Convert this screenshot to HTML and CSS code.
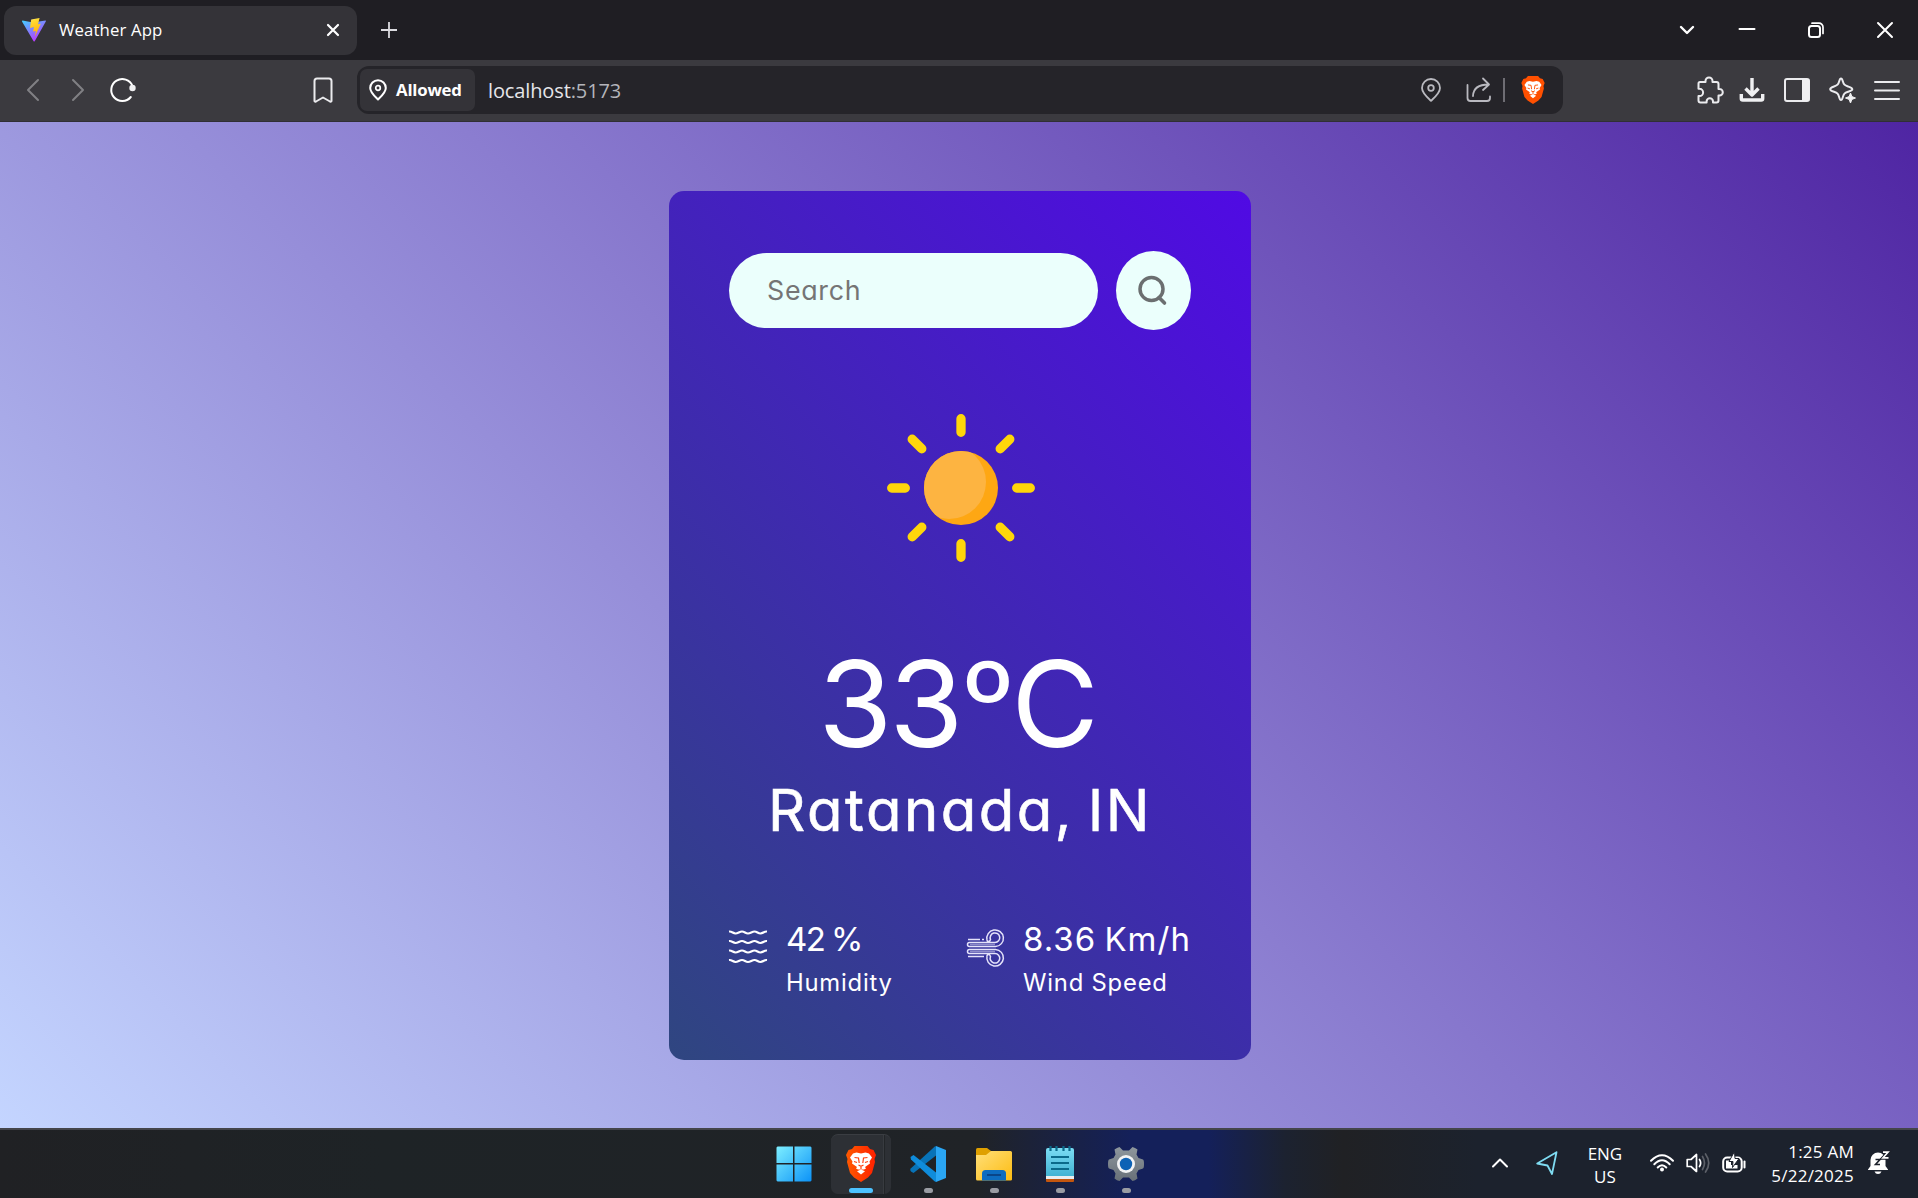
FILE: index.html
```html
<!DOCTYPE html>
<html lang="en">
<head>
<meta charset="utf-8">
<title>Weather App</title>
<link rel="stylesheet" href="styles.css">
</head>
<body>
<header class="titlebar">
  <div class="tab">
    <svg class="tab-logo" width="24" height="24" viewBox="0 0 24 24">
      <defs>
        <linearGradient id="va" x1="0" y1="0" x2="0.6" y2="1"><stop offset="0" stop-color="#41d1ff"/><stop offset="1" stop-color="#bd34fe"/></linearGradient>
        <linearGradient id="vb" x1="0.4" y1="0" x2="0.6" y2="1"><stop offset="0" stop-color="#ffea83"/><stop offset="0.1" stop-color="#ffdd35"/><stop offset="1" stop-color="#ffa800"/></linearGradient>
      </defs>
      <path d="M0.5 2.6 11 4.4 23.4 2.4Q24.300 2.500 23.800 3.400L12.700 23.200Q12.200 24 11.600 23.200L0 3.400Q0 2.600.5 2.600Z" fill="url(#va)"/>
      <path d="M9.200 1.500 17.600 0 16 6.200 18.800 5.700 12.700 18.900 13.900 13 11 13.500 12 9 8 9.900Z" fill="url(#vb)"/>
    </svg>
    <span class="tab-title">Weather App</span>
    <svg class="tab-close" width="14" height="14" viewBox="0 0 14 14"><path d="M2 2 12 12M12 2 2 12" stroke="#fff" stroke-width="2.200" stroke-linecap="round"/></svg>
  </div>
  <svg class="new-tab" width="18" height="18" viewBox="0 0 18 18"><path d="M9 1V17M1 9H17" stroke="#dcdce0" stroke-width="1.800"/></svg>
  <div class="window-controls">
    <svg class="tabs-menu" width="16" height="16" viewBox="0 0 16 16"><path d="M2 5 8 11 14 5" class="ln menu"/></svg>
    <svg width="16" height="16" viewBox="0 0 16 16"><path d="M.5 7H15.500" class="ln w2"/></svg>
    <svg width="16" height="16" viewBox="0 0 16 16"><rect x="1" y="4" width="11" height="11" rx="2.500" class="ln w2"/><path d="M4 1.200H11A4 4 0 0 1 15 5.200V11.500" class="ln"/></svg>
    <svg width="16" height="16" viewBox="0 0 16 16"><path d="M1 1 15 15M15 1 1 15" class="ln w2"/></svg>
  </div>
</header>

<nav class="toolbar">
  <svg class="nav-back" width="14" height="24" viewBox="0 0 14 24"><path d="M12 2 2 12 12 22" class="ln dim"/></svg>
  <svg class="nav-fwd" width="14" height="24" viewBox="0 0 14 24"><path d="M2 2 12 12 2 22" class="ln dim"/></svg>
  <svg class="nav-reload" width="28" height="28" viewBox="0 0 28 28"><path d="M21.800 21A11 11 0 1 1 23.500 10" class="ln w2"/><circle cx="23.500" cy="12" r="3.200" fill="#f0f0f2"/></svg>
  <svg class="nav-mark" width="20" height="26" viewBox="0 0 20 26"><path d="M4 1.500H16Q18.500 1.500 18.500 4V24Q18 25 17 24.500L10 20.500 3 24.500Q2 25 1.500 24V4Q1.500 1.500 4 1.500Z" class="ln w2 soft"/></svg>
  <div class="urlbar">
    <div class="chip">
      <svg width="18" height="22" viewBox="0 0 18 22"><path d="M9 20.500C6 17.500 1.200 13.500 1.200 9A7.800 7.800 0 0 1 16.800 9C16.800 13.500 12 17.500 9 20.500Z" class="ln w2"/><circle cx="9" cy="9" r="2.300" class="ln"/></svg>
      <span>Allowed</span>
    </div>
    <div class="url">localhost<span>:5173</span></div>
    <svg class="url-pin" width="20" height="24" viewBox="0 0 20 24"><path d="M10 22.800C6.500 19.500 1 15 1 10A9 9 0 0 1 19 10C19 15 13.500 19.500 10 22.800Z" class="ln grey"/><circle cx="10" cy="10" r="2.800" class="ln grey"/></svg>
    <svg class="url-share" width="26" height="26" viewBox="0 0 26 26"><path d="M1.500 8V21Q1.500 24 4.500 24H21Q24 24 24 21V19.500M7 19Q7.500 7.500 22.500 7.500M17 1.500 23 7.500 17 13" class="ln grey"/></svg>
    <i class="url-sep"></i>
    <svg class="url-brave" width="24" height="28" viewBox="0 0 30 36"><use href="#lion"/></svg>
  </div>
  <div class="actions">
    <svg width="28" height="28" viewBox="0 0 28 28"><path d="M4 6H9.500V5A3.500 3.500 0 0 1 16.500 5V6H20.500Q22.500 6 22.500 8V13H23.500A3.300 3.300 0 0 1 23.500 19.600H22.500V24.500Q22.500 26.500 20.500 26.500H17V25.500A3.200 3.200 0 0 0 10.600 25.500V26.500H4.500Q2.500 26.500 2.500 24.500V20H3.500A3.600 3.600 0 0 0 3.500 12.800H2.500V7.500Q2.500 6 4 6Z" class="ln w2 soft"/></svg>
    <svg width="26" height="26" viewBox="0 0 26 26"><path d="M13 1V17M6.500 11.500 13 18 19.500 11.500" class="ln w3 butt"/><path d="M2.300 17V21.500Q2.300 23 3.800 23H22.200Q23.700 23 23.700 21.500V17" class="ln w3 butt"/></svg>
    <svg width="28" height="26" viewBox="0 0 28 26"><rect x="2" y="2" width="24" height="22" rx="2" class="ln w2 soft"/><path d="M19 2H25Q26.500 2 26.500 3.500V22.500Q26.500 24 25 24H19Z" fill="#f0f0f2"/></svg>
    <svg width="28" height="28" viewBox="0 0 28 28"><path d="M12 2.500C13 2.500 13.300 3.500 13.800 5.200 14.800 8.500 15.500 9.300 19 10.500 21.500 11.300 23.300 11.800 23.300 13.200 23.300 14.600 21.500 15 19 15.800 15.500 17 14.800 17.800 13.800 21.200 13.300 23 13 24 12 24 11 24 10.700 23 10.200 21.200 9.200 17.800 8.500 17 5 15.800 2.500 15 1.200 14.500 1.200 13.200 1.200 11.900 2.500 11.300 5 10.500 8.500 9.300 9.200 8.500 10.200 5.200 10.700 3.500 11 2.500 12 2.500Z" class="ln w2 soft"/><path d="M21.500 17 22.900 20.600 26.500 22 22.900 23.400 21.500 27 20.100 23.400 16.500 22 20.100 20.600Z" fill="#f0f0f2" stroke="#f0f0f2"/></svg>
    <svg width="28" height="24" viewBox="0 0 28 24"><path d="M2 4H26M2 12.500H26M2 21H26" class="ln w2 soft"/></svg>
  </div>
</nav>

<main class="page">
  <section class="card">
    <div class="search">
      <div class="field">Search</div>
      <div class="go">
        <svg width="30" height="30" viewBox="0 0 30 30"><circle cx="13.500" cy="13" r="11.500" fill="none" stroke="#6b6f70" stroke-width="3.500"/><path d="M21 21.500 26.500 27" stroke="#6b6f70" stroke-width="3.600" stroke-linecap="round"/></svg>
      </div>
    </div>
    <svg class="sun" width="150" height="150" viewBox="-75 -75 150 150">
      <defs><clipPath id="disc"><circle r="37"/></clipPath></defs>
      <g stroke="#ffd60a" stroke-width="9.300" stroke-linecap="round">
        <path d="M0-69.300V-55.700M0 69.300V55.700M-69.300 0H-55.700M69.300 0H55.700M-48.800-48.800-39.200-39.200M48.800-48.800 39.200-39.200M-48.800 48.800-39.200 39.200M48.800 48.800 39.200 39.200"/>
      </g>
      <circle r="37" fill="#fea713"/>
      <circle cx="-12" cy="-6" r="37" fill="#fdb441" clip-path="url(#disc)"/>
    </svg>
    <p class="temp">33<span>º</span>C</p>
    <p class="place">Ratanada, IN</p>
    <div class="stats">
      <div class="stat">
        <svg class="waves" width="38" height="34" viewBox="0 0 38 34" fill="none" stroke="#fff" stroke-width="2.200">
          <path id="wave" d="M0 1.500C3 1.200 4 3.500 6.500 3.500S10.500 1.500 13 1.500 16.500 3.500 19 3.500 23 1.500 25.500 1.500 29 3.500 31.500 3.500 35 1.200 38 1.500"/>
          <use href="#wave" y="9.500"/><use href="#wave" y="19"/><use href="#wave" y="28.500"/>
        </svg>
        <div><p class="value v1">42 %</p><p class="label">Humidity</p></div>
      </div>
      <div class="stat speed">
        <svg width="37" height="38" viewBox="0 0 37 38" fill="none" stroke="#e4e2fa" stroke-width="1.500">
          <path d="M1 10.500H13M15 10.500H17M1 27.500H17"/>
          <path d="M20 11A8.300 8.300 0 1 1 28.500 17.500H2.500A1.500 1.500 0 0 1 2.500 13.500H28A4.800 4.800 0 1 0 23.500 10.500Q23 12.500 21.500 12.500T20 11"/>
          <path d="M20 27A8.300 8.300 0 1 0 28.500 20.500H2.500A1.500 1.500 0 0 0 2.500 24.500H28A4.800 4.800 0 1 1 23.500 27.500Q23 25.500 21.500 25.500T20 27"/>
          <path d="M3 15.500H28M3 22.500H28" opacity=".5"/>
        </svg>
        <div><p class="value v2">8.36 Km/h</p><p class="label">Wind Speed</p></div>
      </div>
    </div>
  </section>
</main>

<footer class="taskbar">
  <div class="apps">
    <div class="app">
      <svg width="36" height="36" viewBox="0 0 36 36"><defs><linearGradient id="win" x1="0" y1="0" x2="36" y2="36" gradientUnits="userSpaceOnUse"><stop stop-color="#7ff0ff"/><stop offset="1" stop-color="#0a91f7"/></linearGradient></defs><path d="M1.500.5H17V17H.5V1.500ZM18.500.5H34.500L35.500 1.500V17H18.500ZM.5 18.500H17V35.500H1.500L.5 34.500ZM18.500 18.500H35.500V34.500L34.500 35.500H18.500Z" fill="url(#win)"/></svg>
    </div>
    <div class="app active">
      <svg width="30" height="36" viewBox="0 0 30 36">
        <defs>
          <linearGradient id="br" x1="0" y1="0" x2="1" y2="0"><stop offset="0" stop-color="#ff5a00"/><stop offset="1" stop-color="#ff2000"/></linearGradient>
          <path id="face" d="M10.500 6.500 15 7.500 19.500 6.500 23 7.500 26 11.500 23.500 15.500 24 17.500 19 21 20 22.500 18 23.500H12L10 22.500 11 21 6 17.500 6.500 15.500 4 11.500 7 7.500ZM11 25.300 15 23.500 19 25.300 15 28.500Z"/>
          <g id="lines"><path d="M8.500 11.500 12.500 12 13.200 17M21.500 11.500 17.500 12 16.800 17M8 15.500 11 16.500M22 15.500 19 16.500M12.500 19 15 20.300 17.500 19M15 20.300V23.300" fill="none" stroke-width="1.200"/></g>
        </defs>
        <path d="M8.500 0H21.500L24 3 27.500 4 30 9 28.500 13 29 16 26 27 22 31.500 15 36 8 31.500 4 27 1 16 1.500 13 0 9 2.500 4 6 3Z" fill="url(#br)"/>
        <use href="#face" fill="#fff"/><use href="#lines" stroke="#ff4010"/>
      </svg>
      <b></b>
    </div>
    <div class="app">
      <svg width="36" height="36" viewBox="0 0 36 36"><path d="M26 0 36 4V32L26 36Z" fill="#2aa6f4"/><path d="M1 25.500 3.500 27 26 9.500V0L24.500.7.7 22.500Q-.5 24 1 25.500Z" fill="#0873b8"/><path d="M1 13.500 .5 11 3.500 9 26 26.500V36L24.500 35.300Z" fill="#0f8cdb"/></svg>
      <b></b>
    </div>
    <div class="app">
      <svg width="36" height="36" viewBox="0 0 36 36"><defs><linearGradient id="fo" x1="0" y1="0" x2="1" y2="1"><stop stop-color="#ffdf79"/><stop offset="1" stop-color="#fdbc12"/></linearGradient></defs><path d="M0 3.500Q0 2 1.500 2H11L15 5V10H0Z" fill="#dfa000"/><path d="M0 9H10L15 5H34.500Q36 5 36 6.500V33.500Q36 34.500 34.500 34.500H1.500Q0 34.500 0 33Z" fill="url(#fo)"/><path d="M6 34.500V27.500Q6 24 9.500 24H26.500Q30 24 30 27.500V34.500Z" fill="#0d6cc0"/><path d="M11 29H25" stroke="#0a4588" stroke-width="2"/></svg>
      <b></b>
    </div>
    <div class="app">
      <svg width="28" height="36" viewBox="0 0 28 36"><defs><linearGradient id="np" x1="0" y1="0" x2="0" y2="1"><stop stop-color="#7bdcf3"/><stop offset="1" stop-color="#42b3d3"/></linearGradient></defs><path d="M0 32H28V35Q28 36 27 36H1Q0 36 0 35Z" fill="#c4560e"/><path d="M0 29H28V33H0Z" fill="#e9eef0"/><path d="M0 4Q0 2 2 2H26Q28 2 28 4V30H0Z" fill="url(#np)"/><path d="M5 11H23M5 17H23M5 23H23M4.500 0V5M10.500 0V5M17.500 0V5M23.500 0V5" stroke="#0b6a8a" stroke-width="2.200"/></svg>
      <b></b>
    </div>
    <div class="app">
      <svg width="36" height="36" viewBox="-18 -18 36 36"><defs><linearGradient id="ge" x1="0" y1="0" x2="0" y2="1"><stop stop-color="#8e979d"/><stop offset="1" stop-color="#687078"/></linearGradient></defs><path d="M-6.500-17Q-9-16.500-11.500-14.500L-10.500-9.500-12.500-6-17-4.500Q-18-4-18 0T-17 4.500L-12.500 6-10.500 9.500-11.500 14.500Q-9 16.500-6.500 17L-3 13.500H3L6.500 17Q9 16.500 11.500 14.500L10.500 9.500 12.500 6 17 4.500Q18 4 18 0T17-4.500L12.500-6 10.500-9.500 11.500-14.500Q9-16.500 6.500-17L3-13.500H-3Z" fill="url(#ge)"/><circle r="9" fill="#f2f3f4"/><circle r="6.200" fill="#0d62b5"/></svg>
      <b></b>
    </div>
  </div>
  <div class="tray">
    <svg class="t-up" width="16" height="10" viewBox="0 0 16 10"><path d="M1 8.500 8 1.500 15 8.500" class="ln w2"/></svg>
    <svg class="t-loc" width="22" height="24" viewBox="0 0 22 24"><path d="M20.500 1.200 1.200 12.500 11.500 14.500 16 23Z" fill="none" stroke="#7fdcf2" stroke-width="1.800" stroke-linejoin="round"/></svg>
    <div class="lang"><span>ENG</span><span>US</span></div>
    <svg class="t-wifi" width="24" height="18" viewBox="0 0 24 18"><path d="M1 6.800Q12-4.500 23 6.800M4.300 10.300Q12 2.200 19.700 10.300M7.700 13.500Q12 9 16.300 13.500" class="ln w2"/><circle cx="12" cy="15.500" r="2" fill="#fff"/></svg>
    <svg class="t-vol" width="25" height="20" viewBox="0 0 25 20"><path d="M1.200 6.500H5L10.500 1.500V18.500L5 13.500H1.200Z" class="ln"/><path d="M13.500 6.500Q15.800 10 13.500 13.500" class="ln"/><path d="M16.500 3.500Q20.500 10 16.500 16.500M19.500 1Q26 10 19.500 19" class="ln faint"/></svg>
    <svg class="t-bat" width="24" height="22" viewBox="0 0 24 22"><rect x="1.200" y="5.500" width="18.500" height="14" rx="4" class="ln w2"/><path d="M22.500 9.500V15.500" class="ln w2"/><path d="M4 8.500H9V13H15.500V16.500H4Z" fill="#fff"/><path d="M12.500-.5 7 9.500H11L10.500 15.500 17 6.500H13Z" fill="#fff" stroke="#1c212b" stroke-width="1"/></svg>
    <div class="clock"><span>1:25 AM</span><span>5/22/2025</span></div>
    <svg class="t-bell" width="22" height="24" viewBox="0 0 22 24"><path d="M0 18.500 2.500 15V9A7.500 7.500 0 0 1 10 1.500 7.500 7.500 0 0 1 17.500 9V15L20 18.500V19H0ZM6.500 20.500H13.500Q12.500 23 10 23T6.500 20.500Z" fill="#fff"/><path d="M7.500 8.500H12L7.500 13.500H12" fill="none" stroke="#1c212b" stroke-width="1.600"/><path d="M15 1H20.500L15 7H20.500" fill="none" stroke="#1c212b" stroke-width="3.600"/><path d="M15 1.200H20L15 6.800H20.500" fill="none" stroke="#fff" stroke-width="1.700"/></svg>
  </div>
</footer>
<svg width="0" height="0" class="defs"><defs><g id="lion"><path d="M8.500 0H21.500L24 3 27.500 4 30 9 28.500 13 29 16 26 27 22 31.500 15 36 8 31.500 4 27 1 16 1.500 13 0 9 2.500 4 6 3Z" fill="#ff5000"/><use href="#face" fill="#fff"/><use href="#lines" stroke="#ff5000"/></g></defs></svg>
</body>
</html>
```

FILE: styles.css
```css
* { box-sizing: border-box; margin: 0; padding: 0; }
body {
  width: 1918px; height: 1198px; overflow: hidden;
  display: grid; grid-template-rows: 60px 62px 1006px 70px;
  font-family: "Open Sans", "Noto Sans", sans-serif; color: #fff;
  background: #1f1e23;
}
svg { display: block; flex: none; overflow: visible; }
.defs { position: absolute; }
.ln { fill: none; stroke: #fff; stroke-width: 1.7; stroke-linecap: round; stroke-linejoin: round; }
.w2 { stroke-width: 2; }
.w3 { stroke-width: 3.4; stroke: #f0f0f2; }
.menu { stroke-width: 2.4; }
.butt { stroke-linecap: butt; }
.soft { stroke: #ebebee; }
.dim { stroke: #808084; stroke-width: 2; }
.grey { stroke: #b9b9bf; stroke-width: 1.8; }
.faint { stroke: #5c6068; }

.titlebar { display: flex; align-items: center; background: #1f1e23; padding-left: 4px; }
.tab { width: 353px; height: 49px; border-radius: 12px; background: #343338; display: flex; align-items: center; padding: 0 17px 0 18px; }
.tab-title { font-size: 16.8px; letter-spacing: .1px; margin-left: 13px; padding-bottom: 2px; flex: 1; white-space: nowrap; }
.new-tab { margin-left: 23px; }
.window-controls { display: flex; gap: 53px; margin-left: auto; padding-right: 25px; }
.tabs-menu { margin-right: -9px; }

.toolbar { display: flex; align-items: center; background: #3b3a3f; border-bottom: 1px solid #302f35; padding: 0 17px 2px 26px; }
.nav-fwd { margin-left: 31px; }
.nav-reload { margin-left: 24px; }
.nav-mark { margin-left: 176px; }
.urlbar { margin-left: 24px; width: 1206px; height: 48px; border-radius: 12px; background: #252429; display: flex; align-items: center; padding: 0 18px 0 3px; }
.chip { width: 115px; height: 42px; border-radius: 7px; background: #343338; display: flex; align-items: center; padding-left: 9px; gap: 9px; font-size: 16.8px; font-weight: 700; letter-spacing: -.2px; }
.url { margin-left: 13px; font-size: 20px; letter-spacing: -.12px; padding-top: 1px; color: #e6e6ea; flex: 1; }
.url span { color: #b4b4ba; }
.url-share { margin-left: 25px; }
.url-sep { width: 2px; height: 24px; background: #6e6d73; margin: 0 16px 0 11px; }
.actions { margin-left: auto; display: grid; align-items: center; grid-template-columns: 43px 44px 46px 44px 28px; }

.page { background: linear-gradient(45deg, #c4d5ff, #8b7dd0 50%, #4f25a3); display: flex; justify-content: center; align-items: flex-start; padding: 69px 0 0 2px; }
.card { width: 582px; height: 869px; border-radius: 15px; padding: 60px; background: linear-gradient(45deg, #2f4680, #500ae4); font-family: Inter, sans-serif; font-feature-settings: "cv11"; display: flex; flex-direction: column; align-items: center; }
.search { width: 100%; display: flex; align-items: center; justify-content: space-between; }
.field { width: 369px; height: 75px; border-radius: 38px; background: #ebfffc; color: #757575; font-size: 26.8px; line-height: 75px; padding-left: 38px; letter-spacing: .7px; }
.go { width: 75px; height: 79px; border-radius: 50%; background: #ebfffc; display: flex; align-items: center; justify-content: center; padding-right: 2px; }
.sun { margin: 83px 0 0 2px; }
.temp { margin-top: 81px; height: 120px; font-size: 120px; line-height: 120px; letter-spacing: -3px; padding-right: 6px; white-space: nowrap; }
.temp span { font-family: Lato, sans-serif; font-size: 136px; line-height: 1px; vertical-align: -12px; letter-spacing: -4px; }
.place { margin-top: 11px; font-size: 58px; line-height: 70px; white-space: nowrap; letter-spacing: 2.5px; word-spacing: -5px; -webkit-text-stroke: .6px #fff; }
.stats { margin-top: 74px; width: 100%; display: flex; justify-content: space-between; }
.stat { display: flex; gap: 19px; white-space: nowrap; }
.stat svg { margin-top: 10px; }
.stat .waves { margin-top: 11px; }
.speed { width: 224px; }
.value { font-size: 33px; line-height: 40px; }
.v1 { letter-spacing: -1.6px; word-spacing: -1px; }
.v2 { letter-spacing: 1px; word-spacing: -2px; }
.label { font-size: 23.8px; line-height: 32px; margin-top: 8px; letter-spacing: .8px; }

.taskbar { border-top: 2px solid #44454b; background: linear-gradient(90deg, #202124 0, #1e2326 20%, #202327 51%, #14205a 59%, #14205a 63%, #1c2230 67%, #202124 70%, #1c222d 77%, #1c222d 100%); display: flex; justify-content: space-between; padding-left: 767px; }
.apps { display: flex; gap: 12px; padding-top: 4px; }
.app { width: 54px; height: 60px; display: flex; flex-direction: column; align-items: center; padding-top: 12px; border-radius: 7px; }
.app b { width: 9px; height: 5px; border-radius: 3px; background: #9a9ca3; margin-top: 6px; }
.app.active { width: 60px; margin: 0 -2px; border-top: 1px solid #3a3d42; padding-top: 11px; background: linear-gradient(90deg, #2d3035 52px, #383b40 52px 53px, #222528 53px 54px, #2d3035 54px); }
.app.active b { width: 24px; background: #4cc2ff; }
.tray { display: flex; align-items: center; padding-right: 28px; padding-bottom: 2px; font-size: 17px; line-height: 24px; }
.lang, .clock { display: flex; flex-direction: column; }
.lang { align-items: center; margin-left: 30px; line-height: 23px; padding-top: 3px; }
.clock { align-items: flex-end; margin-left: 25px; padding-top: 1px; letter-spacing: .25px; }
.t-loc { margin-left: 28px; }
.t-wifi { margin-left: 28px; }
.t-vol { margin-left: 12px; }
.t-bat { margin-left: 11px; }
.t-bell { margin-left: 14px; }
```
